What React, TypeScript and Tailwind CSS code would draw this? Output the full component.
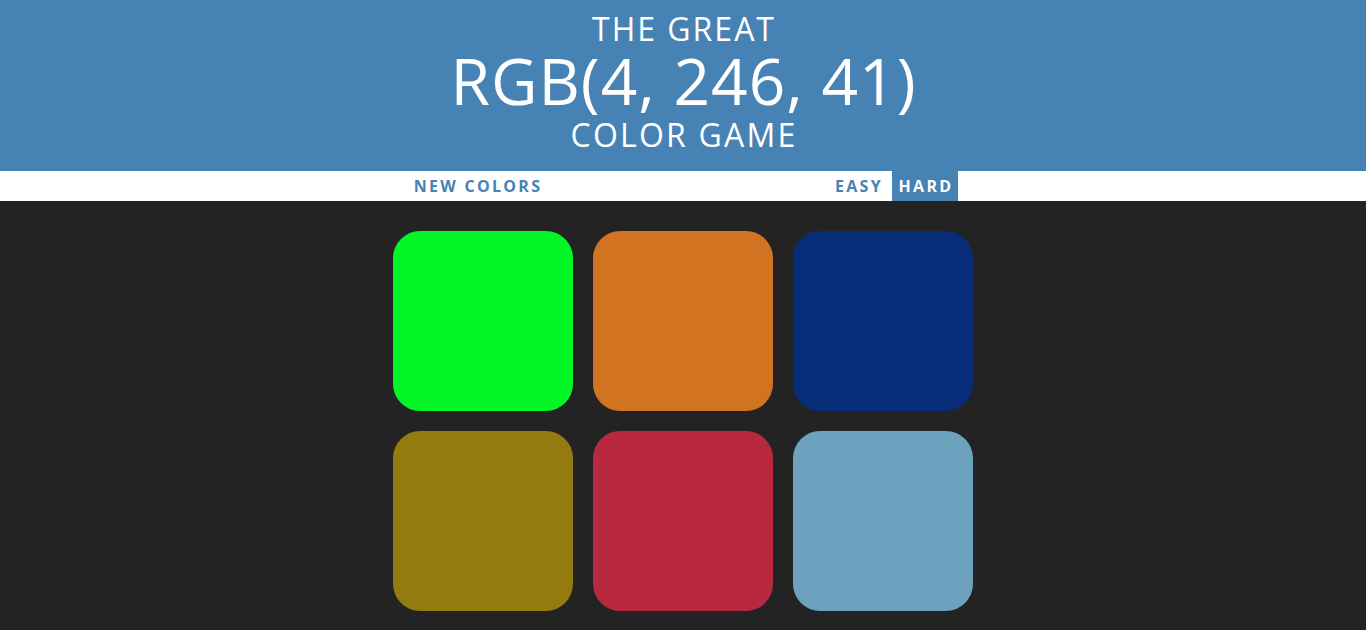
const colors = [
  '#04f629',
  '#d27322',
  '#082d78',
  '#947b10',
  '#b82940',
  '#6ca2bd',
];

export default function App() {
  return (
    <div className="min-h-[630px] bg-[#232323] font-['Open_Sans',sans-serif]">
      {/* Header */}
      <h1 className="bg-[#4682b4] pt-[11px] pb-[19px] text-center font-normal uppercase leading-[1.1] text-white">
        <span className="block pl-[2px] text-[32px] tracking-[2px]">The Great</span>
        <span className="block pl-[1px] text-[64px] tracking-[1px]">RGB(4, 246, 41)</span>
        <span className="block pl-[2px] text-[32px] tracking-[2.2px]">Color Game</span>
      </h1>

      {/* Stripe */}
      <div className="flex h-[30px] items-stretch justify-center bg-white">
        <button className="w-[138px] pl-[2px] text-[16px] font-bold uppercase tracking-[2.3px] text-[#4682b4]">
          New Colors
        </button>
        <span className="w-[283px]" />
        <button className="w-[58px] pl-[2px] text-[16px] font-bold uppercase tracking-[2.3px] text-[#4682b4]">
          Easy
        </button>
        <span className="w-[5px]" />
        <button className="w-[66px] bg-[#4682b4] pl-[2px] text-[16px] font-bold uppercase tracking-[2.3px] text-white">
          Hard
        </button>
      </div>

      {/* Squares */}
      <div className="mx-auto mt-[20px] flex w-[600px] flex-wrap">
        {colors.map(c => (
          <div
            key={c}
            className="m-[10px] h-[180px] w-[180px] rounded-[27px]"
            style={{ backgroundColor: c }}
          />
        ))}
      </div>
    </div>
  );
}
